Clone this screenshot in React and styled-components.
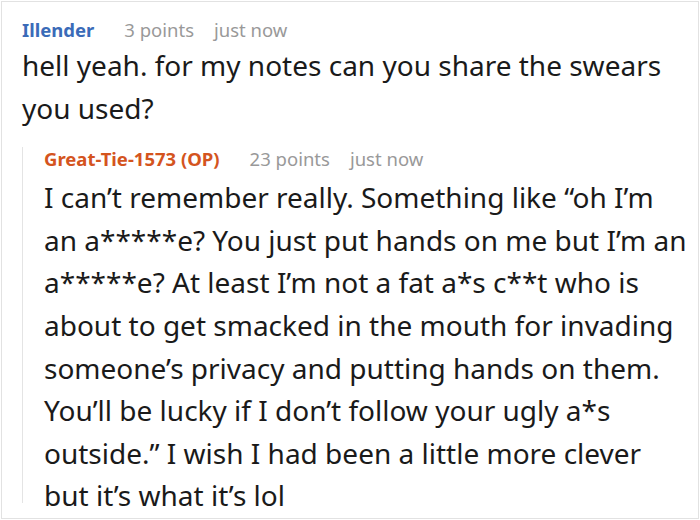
import React from 'react';
import styled, { createGlobalStyle } from 'styled-components';

const GlobalStyle = createGlobalStyle`
    html, body {
        margin: 0;
        padding: 0;
        background: #fff;
    }
    body {
        font-family: "Noto Sans", "Open Sans", sans-serif;
    }
`

const Frame = styled.div`
    box-sizing: border-box;
    margin: 1px 0 0 1px;
    width: 698px;
    height: 518px;
    border: 1px solid #e2e2e2;
    padding: 14px 0 0 20px;
    overflow: hidden;
`

const Comment = styled.div`
    display: flex;
    flex-direction: column;
`

const Meta = styled.div`
    display: flex;
    align-items: baseline;
    gap: 20px;
    font-size: 18.5px;
    line-height: 28px;
    color: #999;
    padding-bottom: ${({ $nested }) => ($nested ? '3px' : '0')};
`

const Author = styled.span`
    font-weight: 700;
    color: ${({ $op }) => ($op ? '#d4541e' : '#3a6bb8')};
    margin-right: 10px;
`

const Body = styled.p`
    margin: 0;
    font-size: 28px;
    line-height: 42.6px;
    color: #1a1a1a;
    white-space: pre;
`

const Replies = styled.div`
    position: relative;
    margin-top: 16px;
    padding-left: 22px;

    /* thread line stops a bit short of the last line */
    &::before {
        content: '';
        position: absolute;
        left: 0;
        top: 2px;
        bottom: 14px;
        width: 1px;
        background: #e4e4e4;
    }
`

const comments = {
    author: 'Illender',
    points: '3 points',
    time: 'just now',
    text: 'hell yeah. for my notes can you share the swears\nyou used?',
    reply: {
        author: 'Great-Tie-1573 (OP)',
        op: true,
        points: '23 points',
        time: 'just now',
        text: [
            'I can\u2019t remember really. Something like \u201coh I\u2019m',
            'an a*****e? You just put hands on me but I\u2019m an',
            'a*****e? At least I\u2019m not a fat a*s c**t who is',
            'about to get smacked in the mouth for invading',
            'someone\u2019s privacy and putting hands on them.',
            'You\u2019ll be lucky if I don\u2019t follow your ugly a*s',
            'outside.\u201d I wish I had been a little more clever',
            'but it\u2019s what it\u2019s lol',
        ].join('\n'),
    },
}

function CommentItem({ c, nested }) {
    return (
        <Comment>
            <Meta $nested={nested}>
                <Author $op={c.op}>{c.author}</Author>
                <span>{c.points}</span>
                <span>{c.time}</span>
            </Meta>
            <Body>{c.text}</Body>
            {c.reply && (
                <Replies>
                    <CommentItem c={c.reply} nested />
                </Replies>
            )}
        </Comment>
    )
}

export default function App() {
    return (
        <>
            <GlobalStyle />
            <Frame>
                <CommentItem c={comments} />
            </Frame>
        </>
    )
}
